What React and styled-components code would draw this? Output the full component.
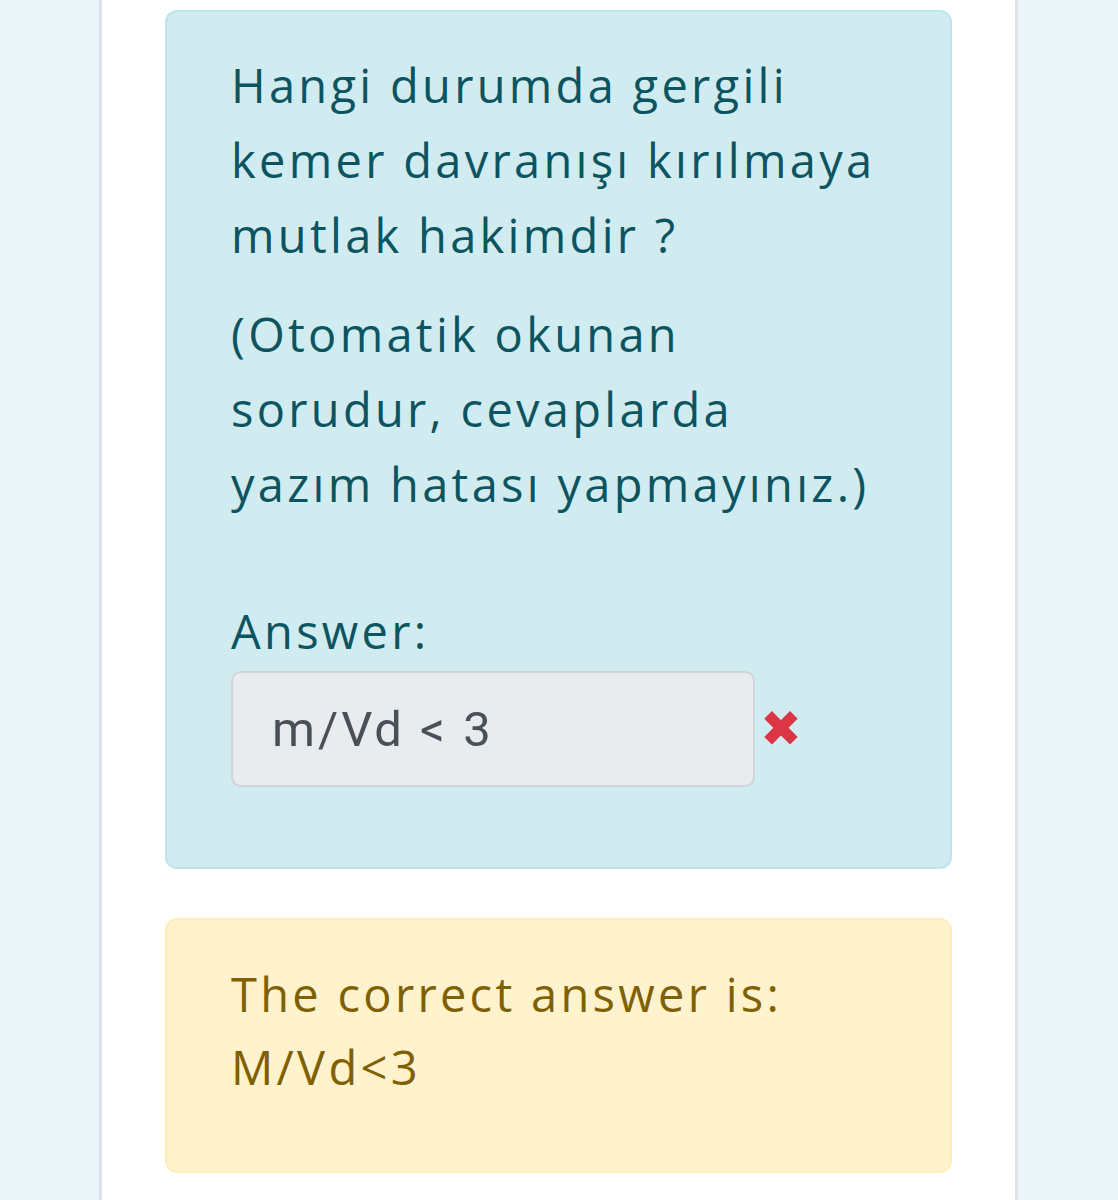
import React from "react";
import styled, { createGlobalStyle } from "styled-components";

const GlobalStyle = createGlobalStyle`
  html, body {
    margin: 0;
    padding: 0;
    background: #ebf4f8;
  }
`;

const palette = {
  info: { bg: "#d1ecf1", border: "#bee5eb", color: "#0c5460" },
  warning: { bg: "#fff3cd", border: "#ffeeba", color: "#7f6003" },
};

const Page = styled.div`
  min-height: 1200px;
  background: #ebf4f8;
`;

const Card = styled.div`
  margin-left: 99px;
  width: 919px;
  min-height: 1200px;
  box-sizing: border-box;
  background: #ffffff;
  border-left: 3px solid #dce3e8;
  border-right: 3px solid #dce3e8;
  padding: 10px 63px 0;
  display: flex;
  flex-direction: column;
  gap: 49px;
`;

const Alert = styled.div`
  background: ${(p) => palette[p.$variant].bg};
  border: 2px solid ${(p) => palette[p.$variant].border};
  color: ${(p) => palette[p.$variant].color};
  border-radius: 12px;
  padding: ${(p) => p.$pad};
  font-family: "Open Sans", "Liberation Sans", sans-serif;
  font-size: 47px;
  line-height: ${(p) => p.$lh || "75px"};
  letter-spacing: 3.3px;
`;

const QuestionText = styled.p`
  margin: 0 0 24px;
`;

const AnswerLabel = styled.div`
  margin-top: 72px;
  margin-bottom: 2px;
`;

const AnswerRow = styled.div`
  display: flex;
  align-items: center;
  gap: 5px;
`;

const AnswerInput = styled.div`
  width: 524px;
  height: 116px;
  box-sizing: border-box;
  display: flex;
  align-items: center;
  padding-left: 39px;
  background: #e9ecef;
  border: 2px solid #ced4da;
  border-radius: 10px;
  color: #495057;
  font-family: Roboto, "Liberation Sans", sans-serif;
  font-size: 49px;
  letter-spacing: 3px;
`;

const WrongMark = styled.span`
  color: #dc3545;
  font-family: "DejaVu Sans", sans-serif;
  font-size: 50px;
  line-height: 1;
  letter-spacing: 0;
`;

const CorrectText = styled.div``;

export default function App() {
  return (
    <Page>
      <GlobalStyle />
      <Card>
        <Alert $variant="info" $pad="36px 64px 80px">
          <QuestionText>
            Hangi durumda gergili
            <br />
            kemer davranışı kırılmaya
            <br />
            mutlak hakimdir ?
          </QuestionText>
          <QuestionText>
            (Otomatik okunan
            <br />
            sorudur, cevaplarda
            <br />
            yazım hatası yapmayınız.)
          </QuestionText>
          <AnswerLabel>Answer:</AnswerLabel>
          <AnswerRow>
            <AnswerInput>m/Vd &lt; 3</AnswerInput>
            <WrongMark>✖</WrongMark>
          </AnswerRow>
        </Alert>
        <Alert $variant="warning" $pad="38px 64px 67px" $lh="73px">
          <CorrectText>The correct answer is:</CorrectText>
          <CorrectText>M/Vd&lt;3</CorrectText>
        </Alert>
      </Card>
    </Page>
  );
}
